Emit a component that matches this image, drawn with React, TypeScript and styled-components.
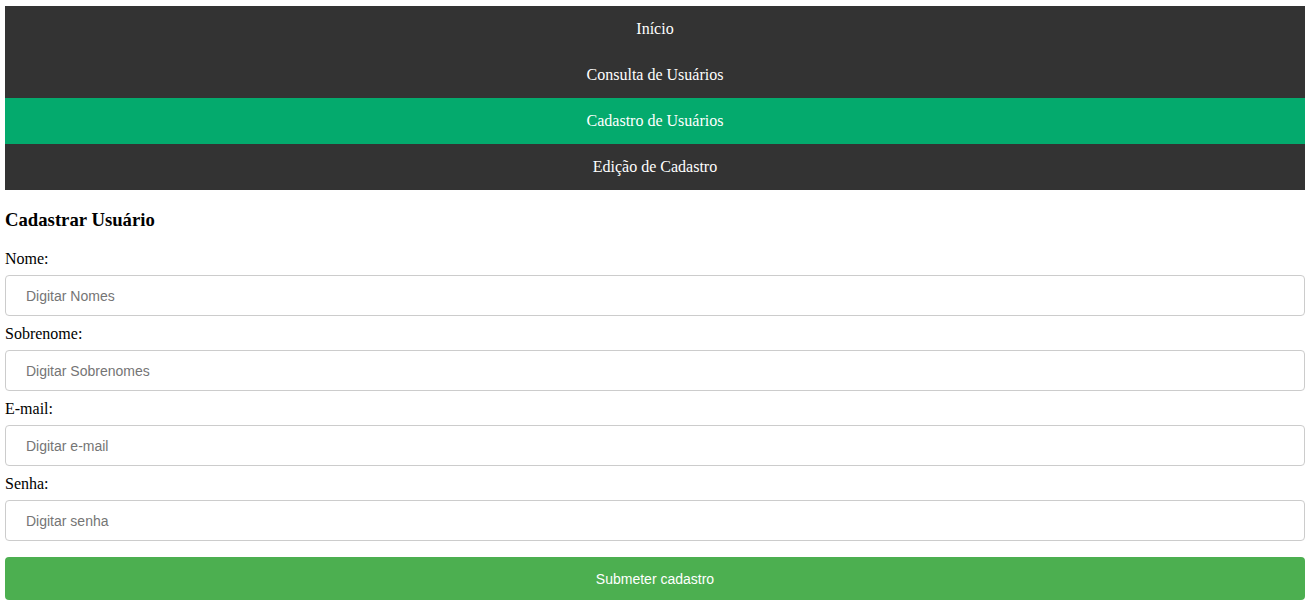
import React from 'react'
import styled, { createGlobalStyle } from 'styled-components'

const GlobalStyle = createGlobalStyle`
  body {
    margin: 0;
    background: #fff;
    font-family: 'Liberation Serif', 'Times New Roman', serif;
    font-size: 16px;
    color: #000;
  }
`

const menuItems = [
  'Início',
  'Consulta de Usuários',
  'Cadastro de Usuários',
  'Edição de Cadastro',
]

const fields = [
  { label: 'Nome:', placeholder: 'Digitar Nomes', type: 'text' },
  { label: 'Sobrenome:', placeholder: 'Digitar Sobrenomes', type: 'text' },
  { label: 'E-mail:', placeholder: 'Digitar e-mail', type: 'email' },
  { label: 'Senha:', placeholder: 'Digitar senha', type: 'password' },
]

const App = () => {
  return (
    <Page>
      <GlobalStyle />
      <Nav>
        {menuItems.map((item) => (
          <NavItem key={item} active={item === 'Cadastro de Usuários'}>
            {item}
          </NavItem>
        ))}
      </Nav>
      <Title>Cadastrar Usuário</Title>
      <Form onSubmit={(e) => e.preventDefault()}>
        {fields.map((f) => (
          <Field key={f.label}>
            <Label>{f.label}</Label>
            <Input type={f.type} placeholder={f.placeholder} />
          </Field>
        ))}
        <SubmitButton type="submit">Submeter cadastro</SubmitButton>
      </Form>
    </Page>
  )
}

export default App

const Page = styled.div`
  padding: 6px 7px 0 5px;
`

const Nav = styled.nav`
  display: flex;
  flex-direction: column;
  background: #333;
`

const NavItem = styled.a<{ active?: boolean }>`
  display: block;
  height: 46px;
  line-height: 46px;
  text-align: center;
  color: #fff;
  font-size: 16px;
  text-decoration: none;
  background: ${(p) => (p.active ? '#04aa6d' : '#333')};
`

const Title = styled.h3`
  margin: 19px 0 18px;
  font-size: 18.72px;
  line-height: 22px;
  font-weight: bold;
`

const Form = styled.form`
  display: flex;
  flex-direction: column;
`

const Field = styled.div`
  display: flex;
  flex-direction: column;
`

const Label = styled.label`
  height: 19px;
  line-height: 19px;
`

const Input = styled.input`
  box-sizing: border-box;
  width: 100%;
  height: 41px;
  margin: 7px 0 8px;
  padding: 0 20px;
  border: 1px solid #ccc;
  border-radius: 4px;
  font-family: 'Liberation Sans', Arial, sans-serif;
  font-size: 14px;
  color: #333;

  &::placeholder {
    color: #757575;
  }
`

const SubmitButton = styled.button`
  height: 43px;
  margin-top: 8px;
  border: none;
  border-radius: 4px;
  background: #4caf50;
  color: #fff;
  font-family: 'Liberation Sans', Arial, sans-serif;
  font-size: 14px;
  cursor: pointer;
`
